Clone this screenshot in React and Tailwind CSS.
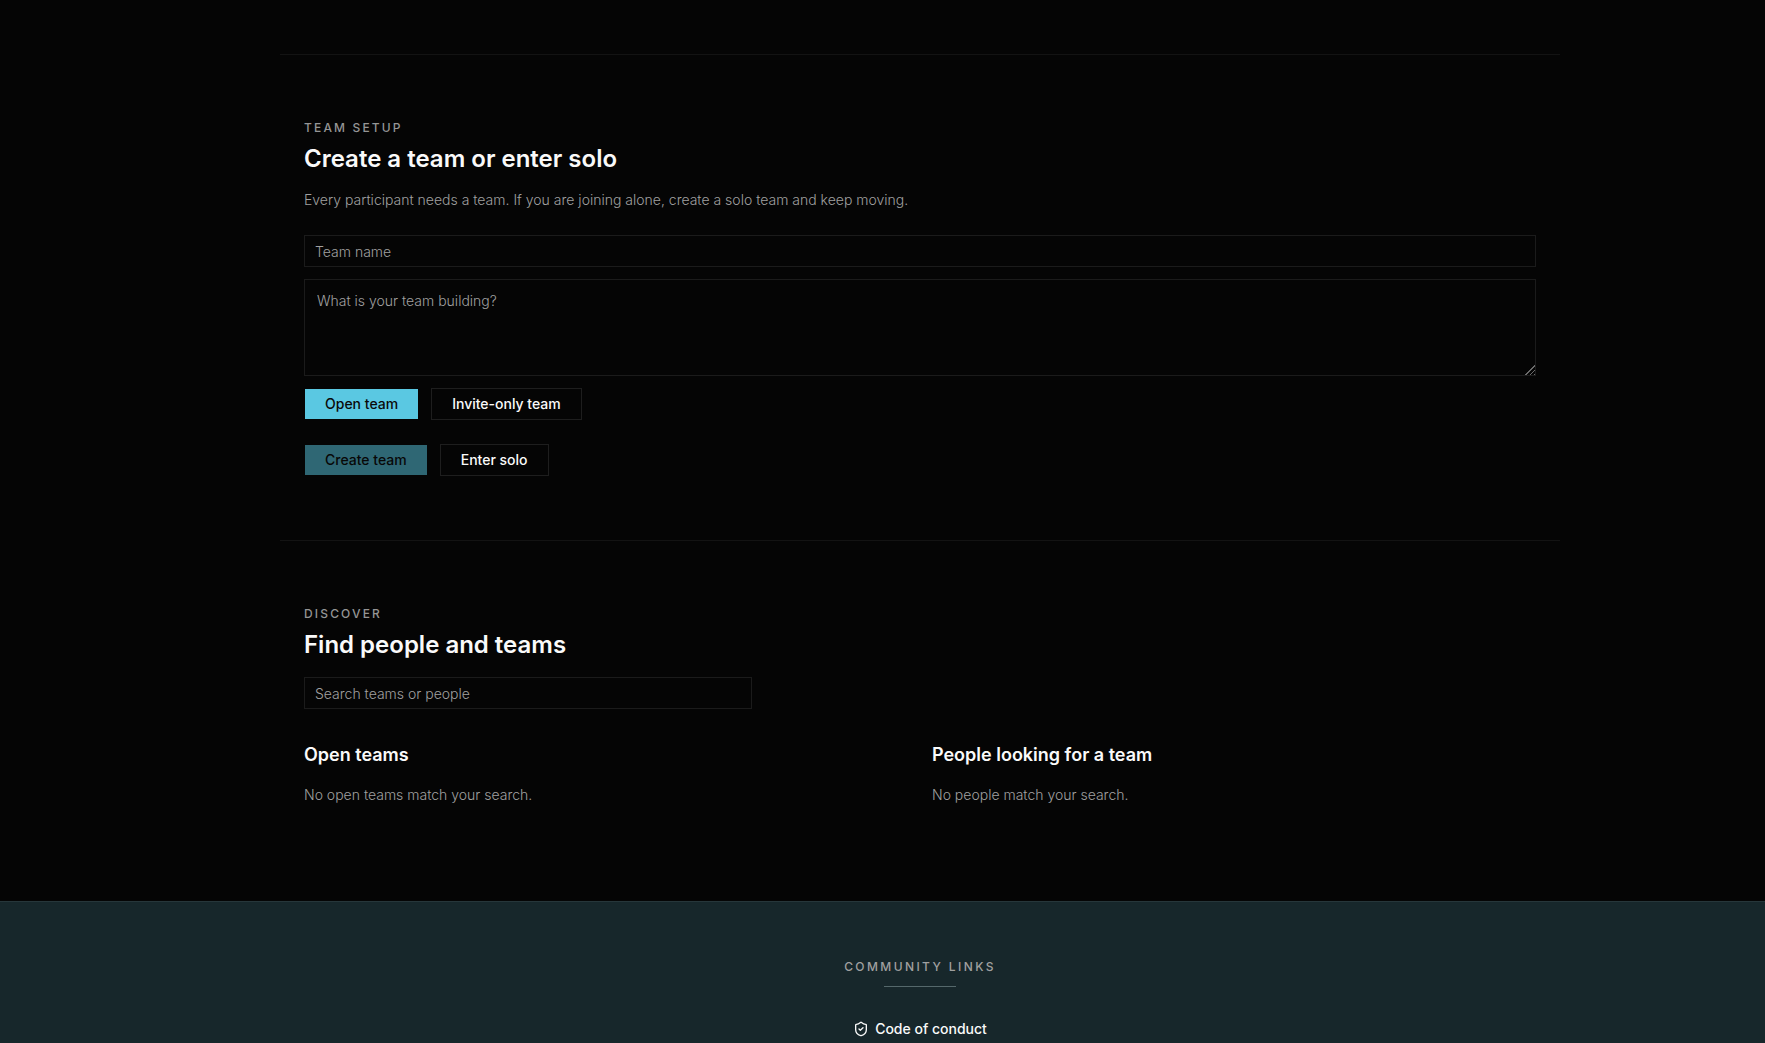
import { useState } from 'react';
import { ShieldCheck } from 'lucide-react';

const buttonBase = 'h-8 border px-5 text-sm font-medium whitespace-nowrap';
const primaryButton = 'border-transparent bg-[#5ac8e2] bg-clip-padding text-[#0a0a0a] disabled:opacity-50';
const outlineButton = 'border-[#1e1e1e] text-[#fafafa] hover:bg-white/5';
const field = 'border border-[#1b1b1b] bg-transparent text-sm text-[#fafafa] placeholder:font-light placeholder:text-[#a0a0a0] outline-none focus:border-[#5ac8e2]';
const resizer = '[&::-webkit-resizer]:bg-[linear-gradient(135deg,#050505_60%,transparent_60%),repeating-linear-gradient(135deg,#050505_0_2px,#6a6a6a_2px_3px)]';

function SectionHeader({ eyebrow, title }) {
  return (
    <div>
      <p className="text-xs leading-[18px] font-medium tracking-[0.18em] text-[#959595] uppercase">{eyebrow}</p>
      <h2 className="mt-1.5 text-2xl font-semibold text-[#fafafa]">{title}</h2>
    </div>
  );
}

function EmptyColumn({ title, message }) {
  return (
    <div>
      <h3 className="text-lg font-semibold text-[#fafafa]">{title}</h3>
      <p className="mt-4 text-sm font-light text-[#a0a0a0]">{message}</p>
    </div>
  );
}

export default function App() {
  const [name, setName] = useState('');
  const [description, setDescription] = useState('');
  const [visibility, setVisibility] = useState('open');
  const [query, setQuery] = useState('');

  return (
    <div className="min-h-screen overflow-x-hidden bg-[#050505] font-['Inter',sans-serif]">
      <main className="pl-[75px] pt-[54px]">
        <div className="mx-auto max-w-7xl">
          <section className="border-t border-[#131313] px-6 py-16">
            <SectionHeader eyebrow="Team setup" title="Create a team or enter solo" />
            <p className="mt-3 text-sm leading-[26px] font-light text-[#a0a0a0]">
              Every participant needs a team. If you are joining alone, create a solo team and keep moving.
            </p>
            <form className="mt-[22px] flex flex-col gap-3" onSubmit={(e) => e.preventDefault()}>
              <input
                type="text"
                aria-label="Team name"
                placeholder="Team name"
                value={name}
                onChange={(e) => setName(e.target.value)}
                className={`${field} h-8 w-full px-2.5`}
              />
              <textarea
                aria-label="What is your team building?"
                placeholder="What is your team building?"
                value={description}
                onChange={(e) => setDescription(e.target.value)}
                className={`${field} ${resizer} block h-[97px] w-full px-3 py-[11px]`}
              />
              <div className="flex gap-3">
                <button
                  type="button"
                  onClick={() => setVisibility('open')}
                  className={`${buttonBase} ${visibility === 'open' ? primaryButton : outlineButton}`}
                >
                  Open team
                </button>
                <button
                  type="button"
                  onClick={() => setVisibility('invite')}
                  className={`${buttonBase} ${visibility === 'invite' ? primaryButton : outlineButton}`}
                >
                  Invite-only team
                </button>
              </div>
              <div className="mt-3 flex gap-3">
                <button type="submit" disabled={!name.trim()} className={`${buttonBase} ${primaryButton}`}>
                  Create team
                </button>
                <button type="button" className={`${buttonBase} ${outlineButton}`}>
                  Enter solo
                </button>
              </div>
            </form>
          </section>

          <section className="border-t border-[#131313] px-6 pt-16 pb-24">
            <SectionHeader eyebrow="Discover" title="Find people and teams" />
            <input
              type="search"
              aria-label="Search teams or people"
              placeholder="Search teams or people"
              value={query}
              onChange={(e) => setQuery(e.target.value)}
              className={`${field} mt-4 block h-8 w-full max-w-md px-2.5`}
            />
            <div className="mt-8 grid grid-cols-2 gap-6">
              <EmptyColumn title="Open teams" message="No open teams match your search." />
              <EmptyColumn title="People looking for a team" message="No people match your search." />
            </div>
          </section>
        </div>
      </main>

      <footer className="border-t border-[#26363a] bg-[#17272b] pt-14 pb-6 pl-[75px]">
        <div className="flex flex-col items-center">
          <p className="text-xs leading-[18px] font-medium tracking-[0.2em] text-[#a0a0a0] uppercase">Community links</p>
          <div className="mt-2.5 h-px w-18 bg-[#55686b]" />
          <a href="#code-of-conduct" className="mt-8 flex items-center gap-1.5 text-sm font-medium text-[#fafafa]">
            <ShieldCheck className="size-4" />
            Code of conduct
          </a>
        </div>
      </footer>
    </div>
  );
}
